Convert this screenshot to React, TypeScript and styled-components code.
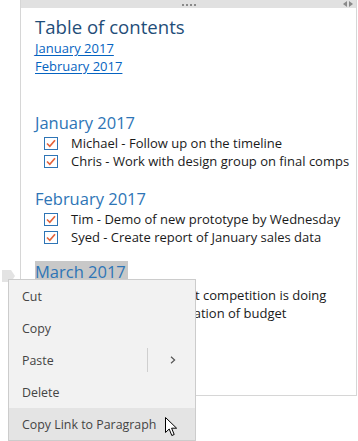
import React from 'react'
import styled, { createGlobalStyle } from 'styled-components'

const Global = createGlobalStyle`
  html, body {
    margin: 0;
    background: #fff;
  }
  body {
    font-family: 'Open Sans', 'Noto Sans', sans-serif;
    color: #1a1a1a;
  }
`

const Screen = styled.div`
  position: relative;
  width: 358px;
  height: 441px;
  overflow: hidden;
`
const Page = styled.div`
  margin-left: 20px;
  width: 335px;
  height: 395px;
  border: 1px solid #d6d6d6;
  border-top: none;
  display: flex;
  flex-direction: column;
`
const TopBar = styled.div`
  height: 8px;
  background: #e1e1e1;
  display: flex;
  align-items: center;
  justify-content: center;
  position: relative;
`
const Grip = styled.div`
  display: flex;
  gap: 2px;
  margin-top: 1px;
  span {
    width: 2px;
    height: 2px;
    background: #8a8a8a;
  }
`
const Arrows = styled.div`
  position: absolute;
  right: 3px;
  top: 1px;
  display: flex;
  gap: 2px;
`
const Content = styled.div`
  padding: 7px 0 0 14px;
  display: flex;
  flex-direction: column;
`
const Title = styled.div`
  font-size: 18.6px;
  line-height: 24px;
  color: #1f4e79;
`
const TocLink = styled.a`
  font-size: 13px;
  line-height: 18px;
  color: #0563c1;
  text-decoration: underline;
  text-underline-offset: 2px;
  width: max-content;
`
const Section = styled.div<{ $gap: number }>`
  margin-top: ${p => p.$gap}px;
  display: flex;
  flex-direction: column;
`
const Heading = styled.div<{ $selected?: boolean }>`
  font-size: 16.5px;
  line-height: 22px;
  color: #2e75b6;
  width: max-content;
  padding-right: 2px;
  margin-bottom: ${p => (p.$selected ? 3 : 0)}px;
  background: ${p => (p.$selected ? '#c8c8c8' : 'transparent')};
`
const Task = styled.div`
  display: flex;
  align-items: center;
  gap: 13px;
  padding-left: 9px;
  font-size: 13px;
  line-height: 18px;
  white-space: nowrap;
`
const Box = styled.span`
  width: 14px;
  height: 13px;
  border: 1px solid #2e75b6;
  box-sizing: border-box;
  display: flex;
  align-items: center;
  justify-content: center;
  background: #fff;
`
const Handle = styled.svg`
  position: absolute;
  left: 2px;
  top: 270px;
`
const Menu = styled.div`
  position: absolute;
  left: 8px;
  top: 279px;
  width: 186px;
  background: #f2f2f2;
  border: 1px solid #cccccc;
  display: flex;
  flex-direction: column;
  font-size: 12.4px;
  color: #444;
`
const Item = styled.div<{ $hover?: boolean }>`
  height: 32px;
  display: flex;
  align-items: center;
  padding-left: 13px;
  position: relative;
  background: ${p => (p.$hover ? '#e4e4e4' : 'transparent')};
`
const Divider = styled.span`
  position: absolute;
  left: 138px;
  top: 4px;
  width: 1px;
  height: 24px;
  background: #cfcfcf;
`
const Chevron = styled.svg`
  position: absolute;
  left: 161px;
  top: 12px;
`
const Cursor = styled.svg`
  position: absolute;
  left: 165px;
  top: 417px;
`

const Check = () => (
  <svg width="10" height="9" viewBox="0 0 10 9">
    <path d="M1 4.5 L3.8 7.3 L9 1.3" stroke="#e4633b" strokeWidth="1.7" fill="none" />
  </svg>
)

const sections = [
  {
    title: 'January 2017',
    gap: 37,
    tasks: ['Michael - Follow up on the timeline', 'Chris - Work with design group on final comps'],
  },
  {
    title: 'February 2017',
    gap: 18,
    tasks: ['Tim - Demo of new prototype by Wednesday', 'Syed - Create report of January sales data'],
  },
  {
    title: 'March 2017',
    gap: 15,
    selected: true,
    tasks: ['Syed - Research what competition is doing', 'Chris - Plan the allocation of budget'],
  },
]

const App = () => (
  <Screen>
    <Global />
    <Page>
      <TopBar>
        <Grip>
          <span />
          <span />
          <span />
          <span />
        </Grip>
        <Arrows>
          <svg width="4" height="6" viewBox="0 0 4 6">
            <path d="M4 0 L0 3 L4 6 Z" fill="#8a8a8a" />
          </svg>
          <svg width="4" height="6" viewBox="0 0 4 6">
            <path d="M0 0 L4 3 L0 6 Z" fill="#8a8a8a" />
          </svg>
        </Arrows>
      </TopBar>
      <Content>
        <Title>Table of contents</Title>
        <TocLink>January 2017</TocLink>
        <TocLink>February 2017</TocLink>
        {sections.map(s => (
          <Section key={s.title} $gap={s.gap}>
            <Heading $selected={s.selected}>{s.title}</Heading>
            {s.tasks.map(t => (
              <Task key={t}>
                <Box>
                  <Check />
                </Box>
                {t}
              </Task>
            ))}
          </Section>
        ))}
      </Content>
    </Page>
    <Handle width="13" height="12" viewBox="0 0 13 12">
      <path d="M0 0 H9 L13 6 L9 12 H0 Z" fill="#e3e3e3" />
    </Handle>
    <Menu>
      <Item>Cut</Item>
      <Item>Copy</Item>
      <Item>
        Paste
        <Divider />
        <Chevron width="6" height="8" viewBox="0 0 6 8">
          <path d="M1 0.8 L4.6 4 L1 7.2" stroke="#555" strokeWidth="1.2" fill="none" />
        </Chevron>
      </Item>
      <Item>Delete</Item>
      <Item $hover>Copy Link to Paragraph</Item>
    </Menu>
    <Cursor width="13" height="20" viewBox="0 0 13 20">
      <path
        d="M0.5 0.5 L0.5 15.5 L4.2 12 L6.8 18.5 L9.2 17.5 L6.6 11.2 L11.6 11.2 Z"
        fill="#fff"
        stroke="#000"
        strokeWidth="1"
        strokeLinejoin="round"
      />
    </Cursor>
  </Screen>
)

export default App
